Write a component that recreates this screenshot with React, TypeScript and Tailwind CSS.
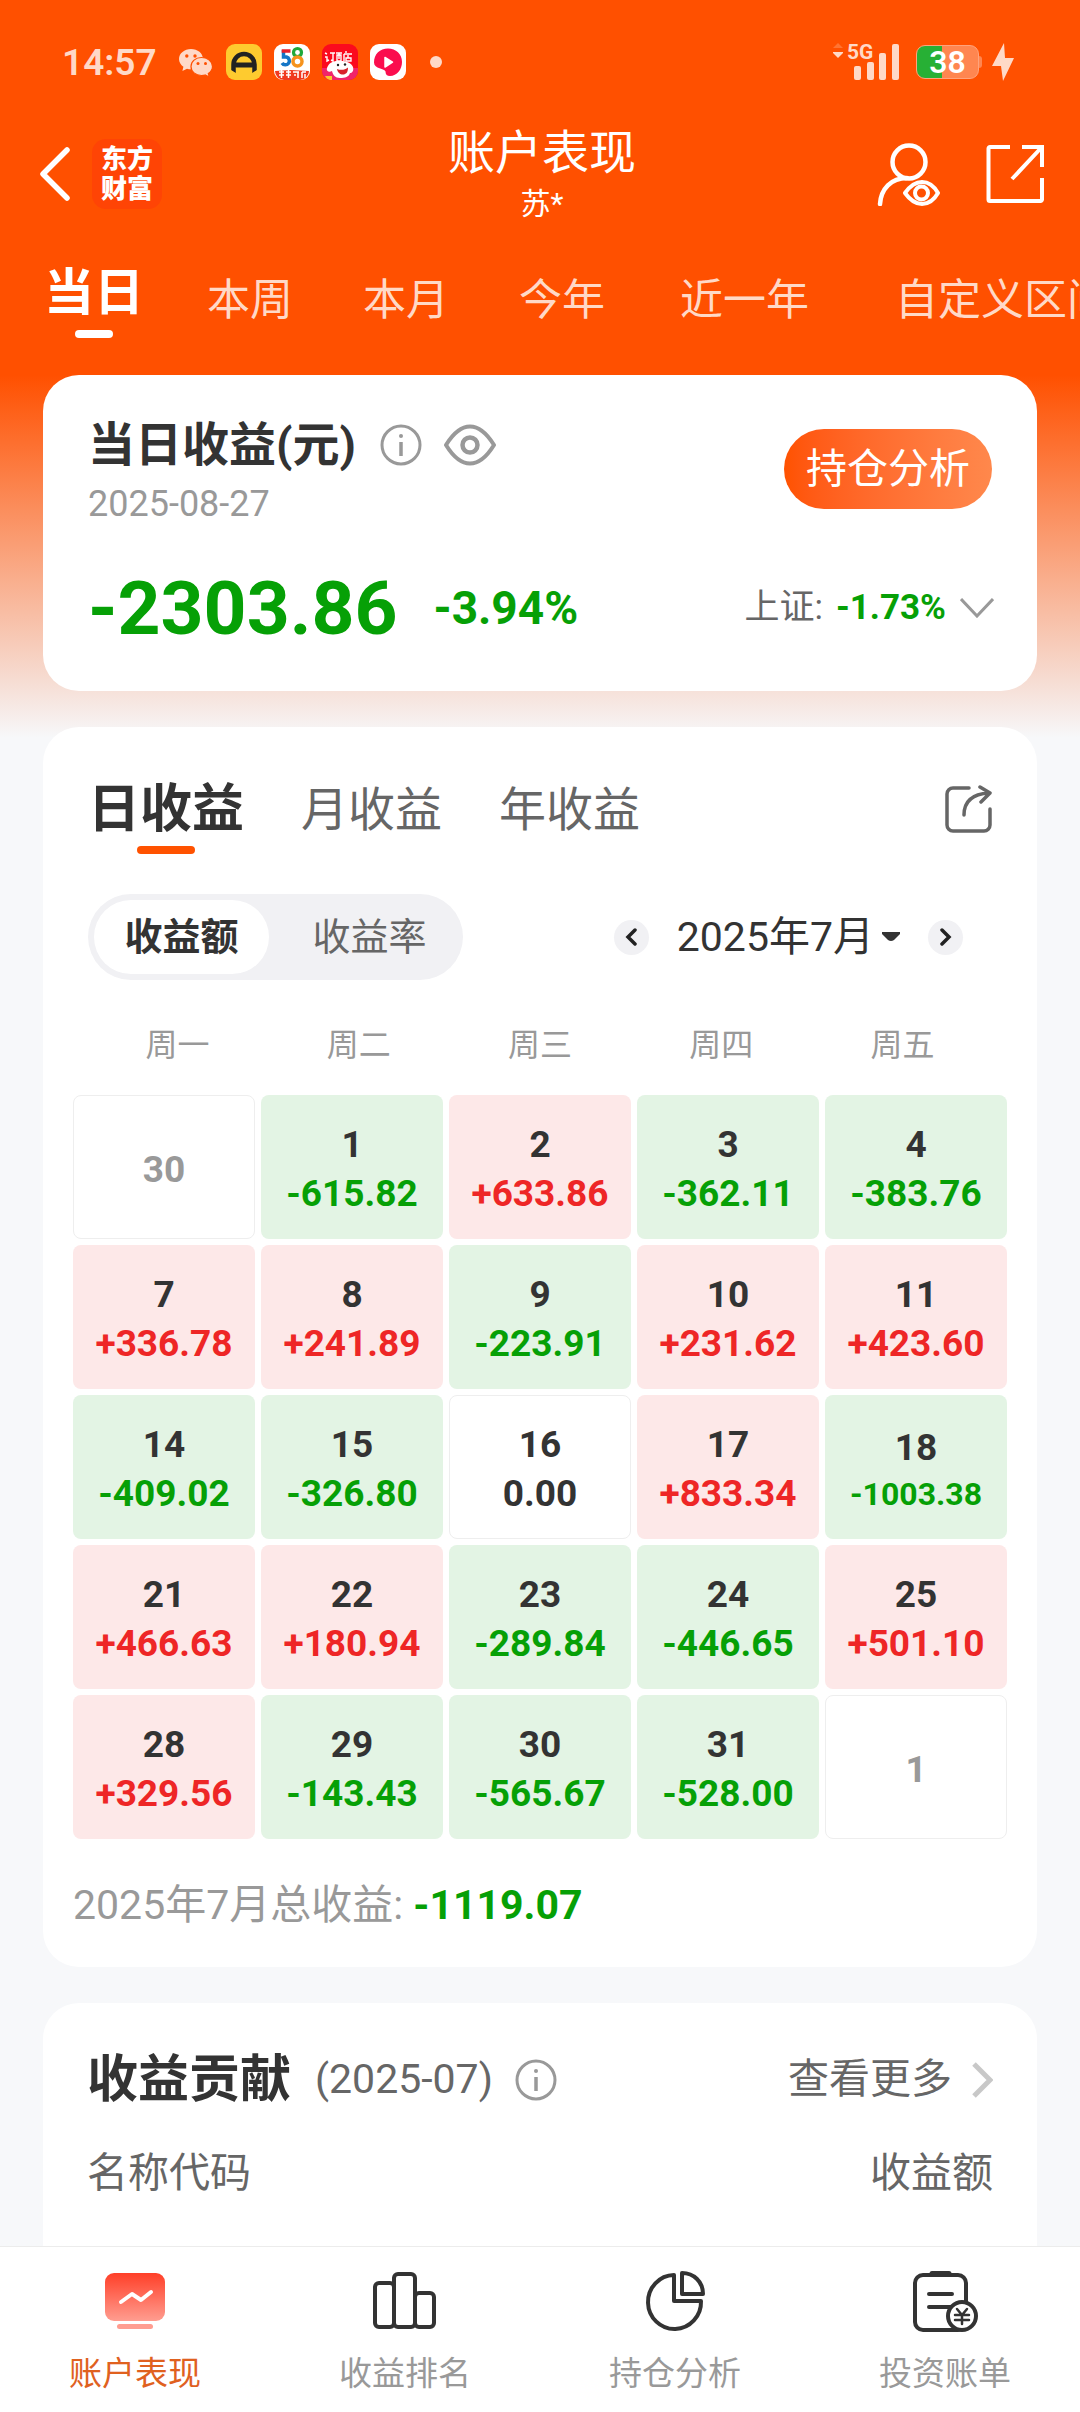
import React from "react";

const headerTabs = [
  { label: "本周", cls: "px-[35px]" },
  { label: "本月", cls: "px-[35px]" },
  { label: "今年", cls: "px-[35px]" },
  { label: "近一年", cls: "px-10" },
  { label: "自定义区间", cls: "px-[46px]" },
];

type Day = { d: string; v?: string };

const weeks: Day[][] = [
  [{ d: "30" }, { d: "1", v: "-615.82" }, { d: "2", v: "+633.86" }, { d: "3", v: "-362.11" }, { d: "4", v: "-383.76" }],
  [{ d: "7", v: "+336.78" }, { d: "8", v: "+241.89" }, { d: "9", v: "-223.91" }, { d: "10", v: "+231.62" }, { d: "11", v: "+423.60" }],
  [{ d: "14", v: "-409.02" }, { d: "15", v: "-326.80" }, { d: "16", v: "0.00" }, { d: "17", v: "+833.34" }, { d: "18", v: "-1003.38" }],
  [{ d: "21", v: "+466.63" }, { d: "22", v: "+180.94" }, { d: "23", v: "-289.84" }, { d: "24", v: "-446.65" }, { d: "25", v: "+501.10" }],
  [{ d: "28", v: "+329.56" }, { d: "29", v: "-143.43" }, { d: "30", v: "-565.67" }, { d: "31", v: "-528.00" }, { d: "1" }],
];

function StatusBar() {
  return (
    <div className="flex h-[124px] items-center pl-[62px] pr-[66px] text-[#ffd9c7]">
      <span className="w-24 text-[37px] font-semibold leading-none">14:57</span>
      <div className="ml-5 flex items-center gap-3">
        <svg width="36" height="36" viewBox="0 0 36 36" aria-label="微信">
          <path fill="#ffd9c7" d="M13 5C6.400 5 1 9.400 1 15c0 3.200 1.700 5.900 4.400 7.700L4.400 27l4.600-2.300c1.300.4 2.600.6 4 .6C19.600 25.300 25 20.700 25 15S19.600 5 13 5z" />
          <circle cx="8.800" cy="12" r="1.700" fill="#ff5000" />
          <circle cx="17" cy="12" r="1.700" fill="#ff5000" />
          <path fill="#ffd9c7" stroke="#ff5000" strokeWidth="1.200" d="M23.500 13.500c-6 0-10.500 4-10.500 9s4.500 9 10.500 9c1.300 0 2.500-.2 3.600-.5l4.200 2-1-3.500c2.500-1.600 4.200-4.100 4.200-7 0-5-5-9-11-9z" />
          <circle cx="20" cy="19.500" r="1.500" fill="#ff5000" />
          <circle cx="27.500" cy="19.500" r="1.500" fill="#ff5000" />
        </svg>
        <svg width="36" height="36" viewBox="0 0 36 36">
          <rect width="36" height="36" rx="9" fill="#fecb2f" />
          <path d="M7.500 29v-8.500a10.500 10.500 0 0 1 21 0V29" fill="none" stroke="#222" strokeWidth="4.500" />
          <path d="M5 26l5 3v2H5zM31 26l-5 3v2h5z" fill="#fecb2f" />
          <rect x="9" y="18.500" width="18" height="5" rx="1" fill="#222" />
        </svg>
        <svg width="36" height="36" viewBox="0 0 36 36">
          <rect width="36" height="36" rx="9" fill="#fff" />
          <path d="M9.500 6v7h3a4 4 0 1 1-4.500 6" fill="none" stroke="#1476c6" strokeWidth="3.500" />
          <path d="M7.700 7H16.500" stroke="#e6212a" strokeWidth="3.500" />
          <circle cx="23.500" cy="8.500" r="4" fill="none" stroke="#1fa83a" strokeWidth="3.200" />
          <circle cx="23.500" cy="17.500" r="4.500" fill="none" stroke="#f6931d" strokeWidth="3.500" />
          <path d="M1 27l16-1 18 1a9 9 0 0 1-9 9H10a9 9 0 0 1-9-9z" fill="#f0391f" />
          <path d="M5 28h5M7.500 26v8M5 31h5M12 28h5M14.500 26v8M12 31h5M19 28h6M24 28v6M20 31h2M28 28h4M28 28v6M31 30v4" stroke="#fff" strokeWidth="1.500" />
        </svg>
        <svg width="36" height="36" viewBox="0 0 36 36">
          <rect width="36" height="36" rx="9" fill="#fb0a1e" />
          <path d="M0 24h36v3a9 9 0 0 1-9 9H9a9 9 0 0 1-9-9z" fill="#f0246a" />
          <path d="M3 9l2 1M3 13h2v4l2-1M8 9h5M11 9v8l-2-1M14 9h6M15 11h4v6h-4zM17 9v6M24 7v2M22 10h8M22 10v7M26 11v3M24 14h5v3h-5z" stroke="#fff" strokeWidth="1.400" fill="none" />
          <path d="M5 24c2-5 5-7 11-7 7-.5 13 1 15 6 1 4-1 6-3 6-1 4-5 5-10 5-5 0-7-3-8-7-3 2-6 0-5-3z" fill="#fff" />
          <path d="M15 25c4 1.500 8 1 11-1.500 0 5-2 7-5 7s-5.500-2-6-5.500z" fill="#d8222c" />
          <circle cx="16" cy="21" r="1.200" fill="#222" />
          <circle cx="23" cy="20.500" r="1.200" fill="#222" />
          <path d="M3 32h7v4H8c-3-1-4-2-5-4z" fill="#fbc52e" />
        </svg>
        <svg width="36" height="36" viewBox="0 0 36 36">
          <rect width="36" height="36" rx="9" fill="#fff" />
          <path d="M18 4.500c8 0 14 5.500 14 13.500 0 7.500-5 14-12 14-3 0-4.500-1.500-4.500-4.500C15 24.500 4 25 4 18.500 4 10 10 4.500 18 4.500z" fill="#fb0d4e" />
          <path d="M15 13.500v9.500l7.500-4.800z" fill="#fff" stroke="#fff" strokeWidth="1.500" strokeLinejoin="round" />
        </svg>
      </div>
      <span className="ml-6 size-3 rounded-full bg-[#ffd9c7]" />
      <div className="ml-auto flex items-center">
        <svg width="67" height="54" viewBox="0 -8 67 54" role="img" aria-label="5G">
          <path d="M0 5l5-5 5 5z" fill="#ff7433" />
          <path d="M0 9h10v1l-5 5-5-5z" fill="#ffd9c7" />
          <text x="14" y="16" fontSize="21" fontWeight="700" fontFamily="Roboto, sans-serif" fill="#ffd9c7">5G</text>
          <g fill="#ffd9c7">
            <rect x="21" y="23" width="7" height="14" rx="2" />
            <rect x="34" y="19" width="7" height="18" rx="2" />
            <rect x="46" y="10" width="7" height="27" rx="2" />
            <rect x="59" y="1" width="7" height="36" rx="2" />
          </g>
        </svg>
        <div className="ml-4 flex h-[34px] w-[63px] items-center justify-center rounded-[9px] border border-[#ffa37c] bg-[linear-gradient(90deg,#27b035_41%,#ff8650_41%)] text-[32px] font-semibold leading-none text-white">
          38
        </div>
        <span className="h-3 w-[3px] rounded-r bg-[#ff8650]" />
        <svg className="ml-[10px]" width="22" height="38" viewBox="0 0 22 38">
          <path d="M12 0L0 23h9l2 15L22 15h-9z" fill="#ffd9c7" />
        </svg>
      </div>
    </div>
  );
}

function InfoIcon() {
  return (
    <svg width="42" height="42" viewBox="0 0 42 42" fill="none" stroke="#999" strokeWidth="3">
      <circle cx="21" cy="21" r="19" />
      <path d="M21 18v14" strokeWidth="3.500" />
      <circle cx="21" cy="12" r="2" fill="#999" stroke="none" />
    </svg>
  );
}

function Header() {
  return (
    <header className="flex h-[100px] items-center pl-10 pr-9">
      <div className="flex flex-1 items-center">
        <button aria-label="返回" className="mr-[22px]">
          <svg width="30" height="54" viewBox="0 0 30 54" fill="none" stroke="#fff" strokeWidth="5.500" strokeLinecap="round" strokeLinejoin="round">
            <path d="M27 3L3 27l24 24" />
          </svg>
        </button>
        <div className="flex size-[70px] flex-col items-center justify-center rounded-[14px] bg-[#ff4405] text-[26px] font-black leading-[30px] text-white">
          <span>东方</span>
          <span>财富</span>
        </div>
      </div>
      <div className="flex flex-col items-center pt-1 text-white">
        <h1 className="text-[47px] leading-[56px]">账户表现</h1>
        <span className="text-[30px] leading-[46px]">苏*</span>
      </div>
      <div className="flex flex-1 items-center justify-end gap-[46px]">
        <button aria-label="账户查看">
          <svg width="63" height="63" viewBox="0 0 63 63" fill="none" stroke="#fff" strokeWidth="4.500" strokeLinecap="round">
            <circle cx="32" cy="19" r="16.500" />
            <path d="M3 61c1-15 11-26 27-26" />
            <path d="M28 50c5-7 10-11 17-11s12 4 16 11c-4 7-9 11-16 11s-12-4-17-11z" strokeWidth="4" strokeLinejoin="round" />
            <circle cx="44.500" cy="50" r="6.500" strokeWidth="4" />
          </svg>
        </button>
        <button aria-label="分享">
          <svg width="58" height="60" viewBox="0 0 58 60" fill="none" stroke="#fff" strokeWidth="4">
            <path d="M24 3H4a1.500 1.500 0 0 0-1.500 1.500v51A1.500 1.500 0 0 0 4 57h50.500a1.500 1.500 0 0 0 1.500-1.500V34" />
            <path d="M36 3h20v20M55 4L26 35" />
          </svg>
        </button>
      </div>
    </header>
  );
}

function PeriodTabs() {
  return (
    <nav className="flex h-[151px] overflow-hidden whitespace-nowrap pt-9 text-white">
      <button className="flex shrink-0 flex-col items-center pl-11 pr-7 text-[50px] font-bold leading-[66px]">
        当日
        <span className="mt-1 h-2 w-[38px] rounded-full bg-white" />
      </button>
      {headerTabs.map((t) => (
        <button key={t.label} className={`h-20 shrink-0 text-[43px] leading-[80px] text-[#ffd9c7] ${t.cls}`}>
          {t.label}
        </button>
      ))}
    </nav>
  );
}

function TodayCard() {
  return (
    <section className="rounded-[36px] bg-white px-[45px] pb-[43px] pt-[37px]">
      <div className="flex items-center justify-between">
        <div>
          <div className="flex items-center">
            <h2 className="text-[47px] font-bold leading-[66px] text-[#333]">当日收益(元)</h2>
            <button aria-label="说明" className="ml-6"><InfoIcon /></button>
            <button aria-label="显示或隐藏" className="ml-[22px]">
              <svg width="52" height="42" viewBox="0 0 52 42" fill="none" stroke="#999" strokeWidth="4">
                <path d="M2 21C10 8 17 2.500 26 2.500S42 8 50 21C42 34 35 39.500 26 39.500S10 34 2 21z" strokeLinejoin="round" />
                <circle cx="26" cy="21" r="7.500" strokeWidth="4.500" />
              </svg>
            </button>
          </div>
          <p className="text-[36px] leading-[52px] text-[#999]">2025-08-27</p>
        </div>
        <button className="mb-1 h-20 w-52 rounded-full bg-gradient-to-r from-[#ff5200] to-[#ff884c] text-[41px] leading-none text-white">持仓分析</button>
      </div>
      <div className="mt-[38px] flex h-20 items-center text-[#06a006]">
        <strong className="text-[75px] font-bold leading-none">-2303.86</strong>
        <strong className="ml-9 text-[46px] font-bold leading-none">-3.94%</strong>
        <button className="-mr-[2px] ml-auto flex items-center text-[35px] leading-[44px]">
          <span className="text-[#666]">上证:</span>
          <strong className="ml-[13px] font-bold">-1.73%</strong>
          <svg className="ml-[14px]" width="34" height="20" viewBox="0 0 34 20" fill="none" stroke="#999" strokeWidth="3">
            <path d="M1 1l16 17L33 1" />
          </svg>
        </button>
      </div>
    </section>
  );
}

function DayCell({ day }: { day: Day }) {
  const v = day.v;
  const tone = !v || v === "0.00" ? "border border-[#eee] bg-white" : v[0] === "+" ? "bg-[#fde8e8]" : "bg-[#e3f4e4]";
  const text = v === "0.00" ? "text-[#333]" : v && v[0] === "+" ? "text-[#ee2626]" : "text-[#06a006]";
  const long = v && v.length > 7;
  const size = long ? "text-[32px] leading-[44px]" : "text-[37px]";
  return (
    <td className={`h-36 rounded-[8px] p-0 pt-1 text-center align-middle font-bold leading-[49px] ${tone}`}>
      <div className={`text-[37px] ${v ? "text-[#333]" : "text-[#999]"}`}>{day.d}</div>
      {v && <div className={`${text} ${size}`}>{v}</div>}
    </td>
  );
}

function CalendarCard() {
  return (
    <section className="rounded-[36px] bg-white px-[30px] pb-8 pt-[46px]">
      <div className="flex h-[82px] items-start px-[15px]">
        <button className="flex flex-col items-center text-[52px] font-bold leading-[73px] text-[#333]">
          日收益
          <span className="h-2 w-[58px] rounded-full bg-[#ff5200]" />
        </button>
        <button className="ml-[57px] text-[47px] leading-[73px] text-[#666]">月收益</button>
        <button className="ml-[57px] text-[47px] leading-[73px] text-[#666]">年收益</button>
        <button aria-label="分享收益" className="ml-auto mt-3">
          <svg width="48" height="48" viewBox="0 0 48 48" fill="none" stroke="#666" strokeWidth="3.500" strokeLinecap="round" strokeLinejoin="round">
            <path d="M25 3H9a6 6 0 0 0-6 6v31a6 6 0 0 0 6 6h31a6 6 0 0 0 6-6V24" />
            <path d="M20 30C20 17 28 9 45 8M36 2l10 6-9 9" />
          </svg>
        </button>
      </div>
      <div className="mt-[39px] flex items-center px-[15px]">
        <div className="flex h-[86px] gap-[13px] rounded-full bg-[#f1f1f4] p-[6px] text-[38px]">
          <button className="w-[175px] rounded-full bg-white font-bold text-[#333]">收益额</button>
          <button className="w-[175px] rounded-full text-[#666]">收益率</button>
        </div>
        <div className="ml-auto mr-[29px] flex items-center">
          <button aria-label="上个月" className="flex size-[35px] items-center justify-center rounded-full bg-[#f1f1f4]">
            <svg width="12" height="18" viewBox="0 0 12 18" fill="none" stroke="#222" strokeWidth="3.500" strokeLinecap="round"><path d="M10 2L3 9l7 7" /></svg>
          </button>
          <button className="ml-7 flex items-center text-[41px] leading-[60px] text-[#333]">
            2025年7月
            <svg className="ml-2" width="18" height="10" viewBox="0 0 18 10"><path d="M0 0h18v2l-6 6q-3 2-6 0L0 2z" fill="#333" /></svg>
          </button>
          <button aria-label="下个月" className="ml-7 flex size-[35px] items-center justify-center rounded-full bg-[#f1f1f4]">
            <svg width="12" height="18" viewBox="0 0 12 18" fill="none" stroke="#222" strokeWidth="3.500" strokeLinecap="round"><path d="M2 2l7 7-7 7" /></svg>
          </button>
        </div>
      </div>
      <div className="mt-[41px] grid grid-cols-5 px-[14px] text-center text-[32px] leading-[48px] text-[#999]">
        {["周一", "周二", "周三", "周四", "周五"].map((w) => (
          <span key={w}>{w}</span>
        ))}
      </div>
      <table className="-mx-[6px] mt-5 w-[calc(100%+12px)] table-fixed border-separate border-spacing-[6px]">
        <tbody>
          {weeks.map((week, i) => (
            <tr key={i}>
              {week.map((day, j) => (
                <DayCell key={j} day={day} />
              ))}
            </tr>
          ))}
        </tbody>
      </table>
      <p className="mt-[30px] text-[41px] leading-[60px] text-[#999]">
        2025年7月总收益: <strong className="font-bold text-[#06a006]">-1119.07</strong>
      </p>
    </section>
  );
}

function ContributionCard() {
  return (
    <section className="h-[300px] rounded-t-[36px] bg-white px-11 pt-[42px]">
      <div className="flex h-[70px] items-center">
        <h2 className="text-[51px] font-bold leading-[70px] text-[#333]">收益贡献</h2>
        <span className="ml-6 text-[41px] text-[#666]">(2025-07)</span>
        <button aria-label="说明" className="ml-[22px]"><InfoIcon /></button>
        <a href="#more" className="ml-auto flex items-center text-[41px] text-[#666]">
          查看更多
          <svg className="ml-5" width="21" height="36" viewBox="0 0 21 36" fill="none" stroke="#c8c8c8" strokeWidth="5"><path d="M2 2l16 16L2 34" /></svg>
        </a>
      </div>
      <div className="mt-[28px] flex justify-between text-[41px] leading-[60px] text-[#666]">
        <span>名称代码</span>
        <span>收益额</span>
      </div>
    </section>
  );
}

function BottomNav() {
  const item = "flex flex-1 flex-col items-center pt-6 text-[33px] leading-[44px] text-[#999]";
  return (
    <nav className="fixed inset-x-0 bottom-0 flex h-[166px] border-t border-[#ececec] bg-white">
      <a href="#performance" className={`${item} text-[#e0611f]!`}>
        <svg width="66" height="64" viewBox="0 0 66 64">
          <defs>
            <linearGradient id="screen" x1="0" y1="0" x2="0" y2="1">
              <stop offset="0" stopColor="#ff3f28" />
              <stop offset="1" stopColor="#ff9d90" />
            </linearGradient>
          </defs>
          <rect x="3" y="2" width="60" height="48" rx="9" fill="url(#screen)" />
          <path d="M19 31l11-8 9 6 10-8" fill="none" stroke="#fff" strokeWidth="4" strokeLinecap="round" strokeLinejoin="round" />
          <rect x="15" y="53" width="36" height="5" rx="2.500" fill="#ff9d90" />
        </svg>
        <span className="mt-[17px]">账户表现</span>
      </a>
      <a href="#ranking" className={item}>
        <svg width="66" height="64" viewBox="0 0 66 64" fill="none" stroke="#333" strokeWidth="4">
          <rect x="3" y="12" width="19" height="44" rx="4" />
          <rect x="22" y="3" width="21" height="53" rx="4" />
          <rect x="43" y="22" width="19" height="34" rx="4" />
        </svg>
        <span className="mt-[17px]">收益排名</span>
      </a>
      <a href="#positions" className={item}>
        <svg width="66" height="64" viewBox="0 0 66 64" fill="none" stroke="#333" strokeWidth="4" strokeLinejoin="round">
          <path d="M32 4A26.500 27 0 1 0 59 30H32z" />
          <path d="M40 2v21h21C61 11 52 2 40 2z" />
        </svg>
        <span className="mt-[17px]">持仓分析</span>
      </a>
      <a href="#bills" className={item}>
        <svg width="66" height="64" viewBox="0 0 66 64" fill="none" stroke="#333" strokeWidth="4" strokeLinecap="round">
          <rect x="3" y="4" width="51" height="55" rx="8" />
          <path d="M20 2.500h17" strokeWidth="5" />
          <path d="M17 23h23M17 36h23" />
          <circle cx="50" cy="45" r="14" fill="#fff" />
          <path d="M45 38l5 6 5-6M50 44v9M43 44h14M43 49h14" strokeWidth="2.500" />
        </svg>
        <span className="mt-[17px]">投资账单</span>
      </a>
    </nav>
  );
}

export default function App() {
  return (
    <div className="h-screen min-h-[900px] overflow-hidden bg-[#f7f8fa] bg-[linear-gradient(180deg,#ff5000_0,#ff5000_375px,#f6dcd2_680px,#f7f8fa_738px)] font-[Roboto,'Noto_Sans_CJK_SC',sans-serif]">
      <StatusBar />
      <Header />
      <PeriodTabs />
      <main className="flex flex-col gap-9 px-[43px]">
        <TodayCard />
        <CalendarCard />
        <ContributionCard />
      </main>
      <BottomNav />
    </div>
  );
}
